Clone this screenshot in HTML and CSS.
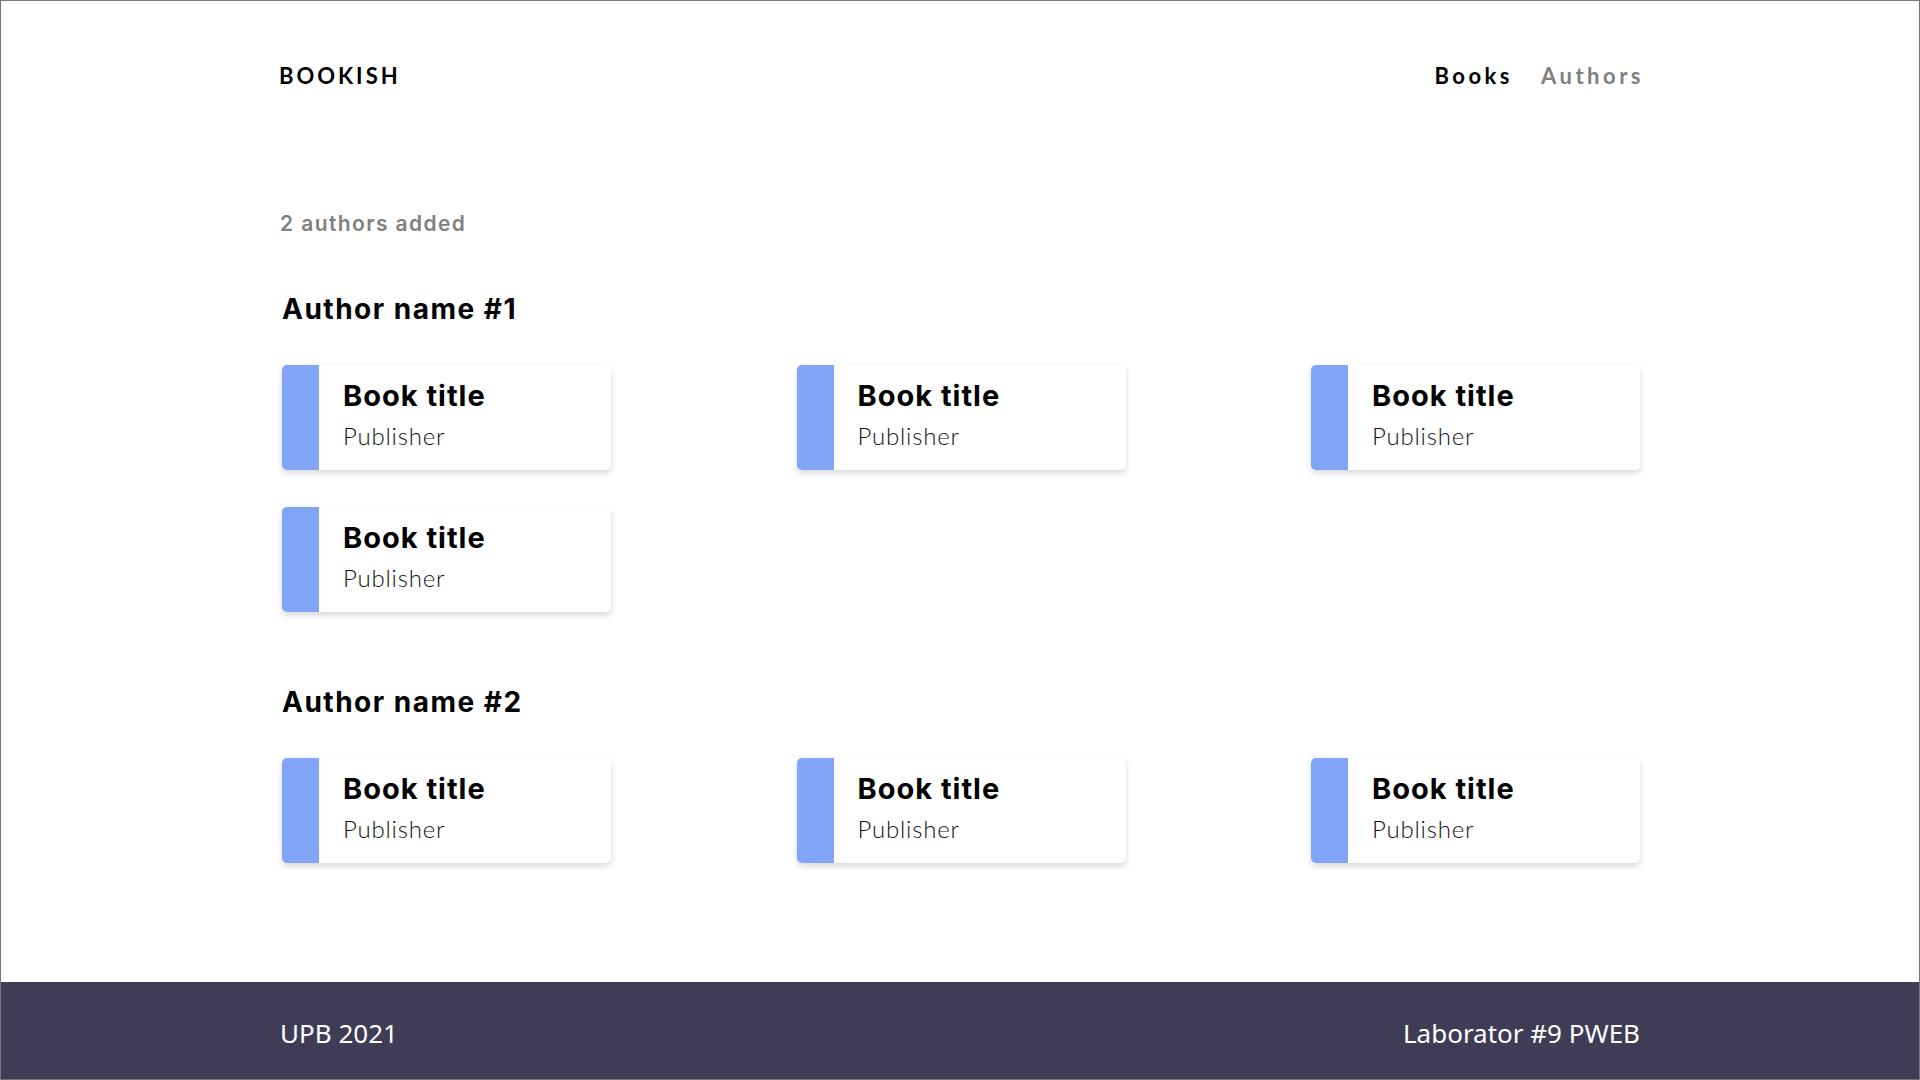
FILE: index.html
```html
<!DOCTYPE html>
<html lang="en">
<head>
<meta charset="utf-8">
<title>Bookish</title>
<link rel="stylesheet" href="styles.css">
</head>
<body>
<div class="page">
  <header class="header">
    <div class="logo">BOOKISH</div>
    <nav class="nav">
      <a class="nav-link active" href="#">Books</a>
      <a class="nav-link" href="#">Authors</a>
    </nav>
  </header>
  <main class="main">
    <p class="count">2 authors added</p>
    <section class="author">
      <h2 class="author-name">Author name #1</h2>
      <div class="grid">
        <div class="card"><div class="stripe"></div><div class="card-body"><div class="title">Book title</div><div class="publisher">Publisher</div></div></div>
        <div class="card"><div class="stripe"></div><div class="card-body"><div class="title">Book title</div><div class="publisher">Publisher</div></div></div>
        <div class="card"><div class="stripe"></div><div class="card-body"><div class="title">Book title</div><div class="publisher">Publisher</div></div></div>
        <div class="card"><div class="stripe"></div><div class="card-body"><div class="title">Book title</div><div class="publisher">Publisher</div></div></div>
      </div>
    </section>
    <section class="author">
      <h2 class="author-name">Author name #2</h2>
      <div class="grid">
        <div class="card"><div class="stripe"></div><div class="card-body"><div class="title">Book title</div><div class="publisher">Publisher</div></div></div>
        <div class="card"><div class="stripe"></div><div class="card-body"><div class="title">Book title</div><div class="publisher">Publisher</div></div></div>
        <div class="card"><div class="stripe"></div><div class="card-body"><div class="title">Book title</div><div class="publisher">Publisher</div></div></div>
      </div>
    </section>
  </main>
  <footer class="footer">
    <div class="footer-inner">
      <span>UPB 2021</span>
      <span>Laborator #9 PWEB</span>
    </div>
  </footer>
</div>
</body>
</html>
```
FILE: styles.css
```css
* { box-sizing: border-box; }
html, body { margin: 0; padding: 0; }
body {
  font-family: Inter, Lato, "Noto Sans", sans-serif;
  color: #000;
  background: #fff;
}
.page {
  min-height: 100vh;
  display: flex;
  flex-direction: column;
  border: 1px solid #777;
}
.header {
  width: 1362px;
  margin: 0 auto;
  height: 149px;
  display: flex;
  align-items: center;
  justify-content: space-between;
}
.logo {
  font-family: Lato, sans-serif;
  font-size: 22px;
  font-weight: 700;
  letter-spacing: 3px;
}
.nav { display: flex; gap: 28px; }
.nav-link {
  font-family: Lato, sans-serif;
  font-size: 22px;
  font-weight: 700;
  letter-spacing: 3.5px;
  color: #808080;
  text-decoration: none;
}
.nav-link.active { color: #000; }
.nav-link:last-child { margin-right: -3px; }
.main {
  flex: 1;
  width: 1360px;
  margin: 0 auto;
}
.count {
  margin: 59px 0 52px;
  font-size: 21px;
  line-height: 30px;
  font-weight: 600;
  letter-spacing: 1.4px;
  color: #808080;
}
.author + .author { margin-top: 72px; }
.author-name {
  margin: 0 0 38px 2px;
  font-size: 28px;
  line-height: 36px;
  font-weight: 700;
  letter-spacing: 1.5px;
}
.grid {
  display: grid;
  grid-template-columns: repeat(3, 329px);
  justify-content: space-between;
  row-gap: 37px;
  padding-left: 2px;
}
.card {
  display: flex;
  height: 105px;
  background: #fff;
  border-radius: 5px;
  box-shadow: 0 3px 6px rgba(0, 0, 0, 0.16);
}
.stripe {
  width: 37px;
  background: #81a4f7;
  border-radius: 5px 0 0 5px;
}
.card-body {
  padding-left: 24px;
  padding-bottom: 3px;
  display: flex;
  flex-direction: column;
  justify-content: center;
}
.title {
  font-size: 29px;
  line-height: 36px;
  font-weight: 700;
  letter-spacing: 1px;
}
.publisher {
  margin-top: 3px;
  font-family: Lato, sans-serif;
  font-size: 24px;
  line-height: 38px;
  font-weight: 300;
  letter-spacing: 0.8px;
  color: #111;
}
.footer {
  height: 97px;
  background: #3f3d56;
  color: #fff;
}
.footer-inner {
  width: 1360px;
  margin: 0 auto;
  height: 100%;
  padding-top: 5px;
  display: flex;
  align-items: center;
  justify-content: space-between;
  font-size: 26px;
  font-family: "Noto Sans", sans-serif;
}
```
